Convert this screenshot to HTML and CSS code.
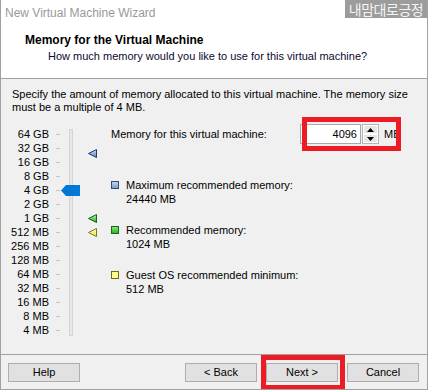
FILE: index.html
```html
<!DOCTYPE html>
<html>
<head>
<meta charset="utf-8">
<link rel="stylesheet" href="styles.css">
</head>
<body>
<div class="window">
  <div class="titlebar">New Virtual Machine Wizard</div>
  <div class="watermark">내맘대로긍정</div>
  <div class="header">
    <div class="h-title">Memory for the Virtual Machine</div>
    <div class="h-sub">How much memory would you like to use for this virtual machine?</div>
  </div>
  <div class="content">
    <p class="intro">Specify the amount of memory allocated to this virtual machine. The memory size<br>must be a multiple of 4 MB.</p>
    <div class="main">
      <div class="scale">
        <div class="labels">
          <div class="row"><span class="lbl">64 GB</span><span class="tick"></span></div>
          <div class="row"><span class="lbl">32 GB</span><span class="tick"></span></div>
          <div class="row"><span class="lbl">16 GB</span><span class="tick"></span></div>
          <div class="row"><span class="lbl">8 GB</span><span class="tick"></span></div>
          <div class="row"><span class="lbl">4 GB</span><span class="tick"></span></div>
          <div class="row"><span class="lbl">2 GB</span><span class="tick"></span></div>
          <div class="row"><span class="lbl">1 GB</span><span class="tick"></span></div>
          <div class="row"><span class="lbl">512 MB</span><span class="tick"></span></div>
          <div class="row"><span class="lbl">256 MB</span><span class="tick"></span></div>
          <div class="row"><span class="lbl">128 MB</span><span class="tick"></span></div>
          <div class="row"><span class="lbl">64 MB</span><span class="tick"></span></div>
          <div class="row"><span class="lbl">32 MB</span><span class="tick"></span></div>
          <div class="row"><span class="lbl">16 MB</span><span class="tick"></span></div>
          <div class="row"><span class="lbl">8 MB</span><span class="tick"></span></div>
          <div class="row"><span class="lbl">4 MB</span><span class="tick"></span></div>
        </div>
        <div class="slider">
          <div class="track"></div>
          <svg class="thumb" width="19" height="11" viewBox="0 0 19 11"><polygon points="0,5.5 5,0 19,0 19,11 5,11" fill="#0078d7"/></svg>
          <svg class="marker" style="top:22px" width="10" height="9" viewBox="0 0 10 9">
            <defs><linearGradient id="gb" x1="0" y1="0" x2="0" y2="1"><stop offset="0" stop-color="#c9d8ee"/><stop offset="1" stop-color="#5f84bd"/></linearGradient></defs>
            <polygon points="0.5,4.5 8.5,0.5 8.5,8.5" fill="url(#gb)" stroke="#1f3a6b" stroke-width="1"/>
          </svg>
          <svg class="marker" style="top:87px" width="10" height="9" viewBox="0 0 10 9">
            <defs><linearGradient id="gg" x1="0" y1="0" x2="0" y2="1"><stop offset="0" stop-color="#b8f0a8"/><stop offset="1" stop-color="#2fa82a"/></linearGradient></defs>
            <polygon points="0.5,4.5 8.5,0.5 8.5,8.5" fill="url(#gg)" stroke="#116611" stroke-width="1"/>
          </svg>
          <svg class="marker" style="top:101px" width="10" height="9" viewBox="0 0 10 9">
            <defs><linearGradient id="gy" x1="0" y1="0" x2="0" y2="1"><stop offset="0" stop-color="#ffffc0"/><stop offset="1" stop-color="#f0e640"/></linearGradient></defs>
            <polygon points="0.5,4.5 8.5,0.5 8.5,8.5" fill="url(#gy)" stroke="#7a7420" stroke-width="1"/>
          </svg>
        </div>
      </div>
      <div class="panel">
        <div class="mem-row">
          <span class="mem-label">Memory for this virtual machine:</span>
          <div class="input">4096</div>
          <div class="spin">
            <div class="spin-btn"><svg width="7" height="4" viewBox="0 0 7 4"><polygon points="0,4 3.5,0 7,4" fill="#000"/></svg></div>
            <div class="spin-btn"><svg width="7" height="4" viewBox="0 0 7 4"><polygon points="0,0 7,0 3.5,4" fill="#000"/></svg></div>
          </div>
          <span class="unit">MB</span>
        </div>
        <div class="legend">
          <div class="item"><span class="sq sq-blue"></span><div class="txt">Maximum recommended memory:<br>24440 MB</div></div>
          <div class="item"><span class="sq sq-green"></span><div class="txt">Recommended memory:<br>1024 MB</div></div>
          <div class="item"><span class="sq sq-yellow"></span><div class="txt">Guest OS recommended minimum:<br>512 MB</div></div>
        </div>
      </div>
    </div>
  </div>
  <div class="footer">
    <button class="btn">Help</button>
    <div class="spacer"></div>
    <button class="btn">&lt; Back</button>
    <button class="btn">Next &gt;</button>
    <button class="btn">Cancel</button>
  </div>
  <div class="redbox redbox-input"></div>
  <div class="redbox redbox-next"></div>
</div>
</body>
</html>
```

FILE: styles.css
```css
* { box-sizing: border-box; }
html, body { margin: 0; padding: 0; }
body {
  font-family: "Liberation Sans", Arial, "Noto Sans CJK KR", sans-serif;
  font-size: 11px;
  color: #000;
  background: #fff;
}
.window {
  position: relative;
  width: 428px;
  height: 390px;
  display: flex;
  flex-direction: column;
  border-left: 1px solid #a0a0a0;
  border-right: 1px solid #a0a0a0;
  border-bottom: 1px solid #a0a0a0;
  overflow: hidden;
  background: #f0f0f0;
}
.titlebar {
  height: 26px;
  background: #fff;
  color: #999;
  font-size: 12px;
  line-height: 26px;
  padding-left: 4px;
}
.watermark {
  position: absolute;
  top: 0;
  right: 0;
  width: 82px;
  height: 18px;
  background: #9c9c9c;
  color: #f4f4f4;
  font-family: "Noto Sans CJK KR", sans-serif;
  font-size: 14px;
  line-height: 18px;
  text-align: center;
  letter-spacing: -0.5px;
}
.header {
  height: 53px;
  background: #fff;
  border-bottom: 1px solid #a0a0a0;
  padding-top: 7px;
}
.h-title {
  font-weight: bold;
  font-size: 12px;
  line-height: 14px;
  padding-left: 24px;
}
.h-sub {
  line-height: 14px;
  margin-top: 2px;
  padding-left: 47px;
  color: #0a0a30;
}
.content {
  flex: 1;
  padding: 9px 11px 0 11px;
}
.intro {
  margin: 0;
  line-height: 13px;
  white-space: nowrap;
}
.main {
  display: flex;
  align-items: flex-start;
  margin-top: 10px;
}
.scale {
  display: flex;
  padding-top: 3px;
}
.labels {
  display: flex;
  flex-direction: column;
}
.row {
  display: flex;
  align-items: center;
  height: 14px;
}
.lbl {
  width: 37px;
  display: flex;
  justify-content: flex-end;
  white-space: nowrap;
  line-height: 14px;
}
.tick {
  width: 4px;
  height: 1px;
  margin-left: 7px;
  background: #c4c4c4;
}
.slider {
  position: relative;
  width: 40px;
  height: 210px;
}
.track {
  position: absolute;
  left: 9px;
  top: 2px;
  width: 4px;
  height: 207px;
  background: #e7e7e7;
  border: 1px solid #d6d6d6;
}
.thumb {
  position: absolute;
  left: 1px;
  top: 58px;
  display: block;
}
.marker {
  position: absolute;
  left: 28px;
  display: block;
}
.panel {
  margin-left: 11px;
  display: flex;
  flex-direction: column;
}
.mem-row {
  display: flex;
  align-items: center;
  height: 20px;
}
.mem-label {
  width: 189px;
  line-height: 14px;
}
.input {
  width: 61px;
  height: 20px;
  background: #fff;
  border: 1px solid #a9a9a9;
  text-align: right;
  padding-right: 3px;
  line-height: 18px;
}
.spin {
  display: flex;
  flex-direction: column;
  width: 17px;
  height: 20px;
  margin-left: 1px;
  border: 1px solid #b4b4b4;
  background: #fff;
}
.spin-btn {
  flex: 1;
  display: flex;
  align-items: center;
  justify-content: center;
  background: #e6e6e6;
  border: 1px solid #fff;
}
.spin-btn svg { display: block; }
.unit {
  margin-left: 5px;
  line-height: 14px;
}
.legend {
  display: flex;
  flex-direction: column;
  gap: 17px;
  margin-top: 34px;
}
.item {
  display: flex;
  align-items: flex-start;
}
.sq {
  width: 8px;
  height: 8px;
  margin-top: 3px;
  border: 1px solid;
  flex: none;
}
.sq-blue { background: linear-gradient(#c3d3ea, #7f9ccb); border-color: #2f4a78; }
.sq-green { background: linear-gradient(#8fe07f, #2eae2a); border-color: #136b13; }
.sq-yellow { background: #ffff88; border-color: #6e6a24; }
.txt {
  margin-left: 7px;
  line-height: 14px;
}
.footer {
  height: 35px;
  border-top: 1px solid #a0a0a0;
  display: flex;
  align-items: flex-start;
  padding: 8px 8px 0 7px;
  gap: 9px;
}
.spacer { flex: 1; }
.btn {
  width: 72px;
  height: 19px;
  padding: 0;
  font-family: "Liberation Sans", Arial, sans-serif;
  font-size: 11px;
  color: #000;
  background: #e1e1e1;
  border: 1px solid #adadad;
  border-radius: 0;
  line-height: 17px;
}
.redbox {
  position: absolute;
  border: 5px solid #ed1c24;
}
.redbox-input {
  left: 301px;
  top: 117px;
  width: 99px;
  height: 34px;
}
.redbox-next {
  left: 260px;
  top: 355px;
  width: 84px;
  height: 35px;
}
```
